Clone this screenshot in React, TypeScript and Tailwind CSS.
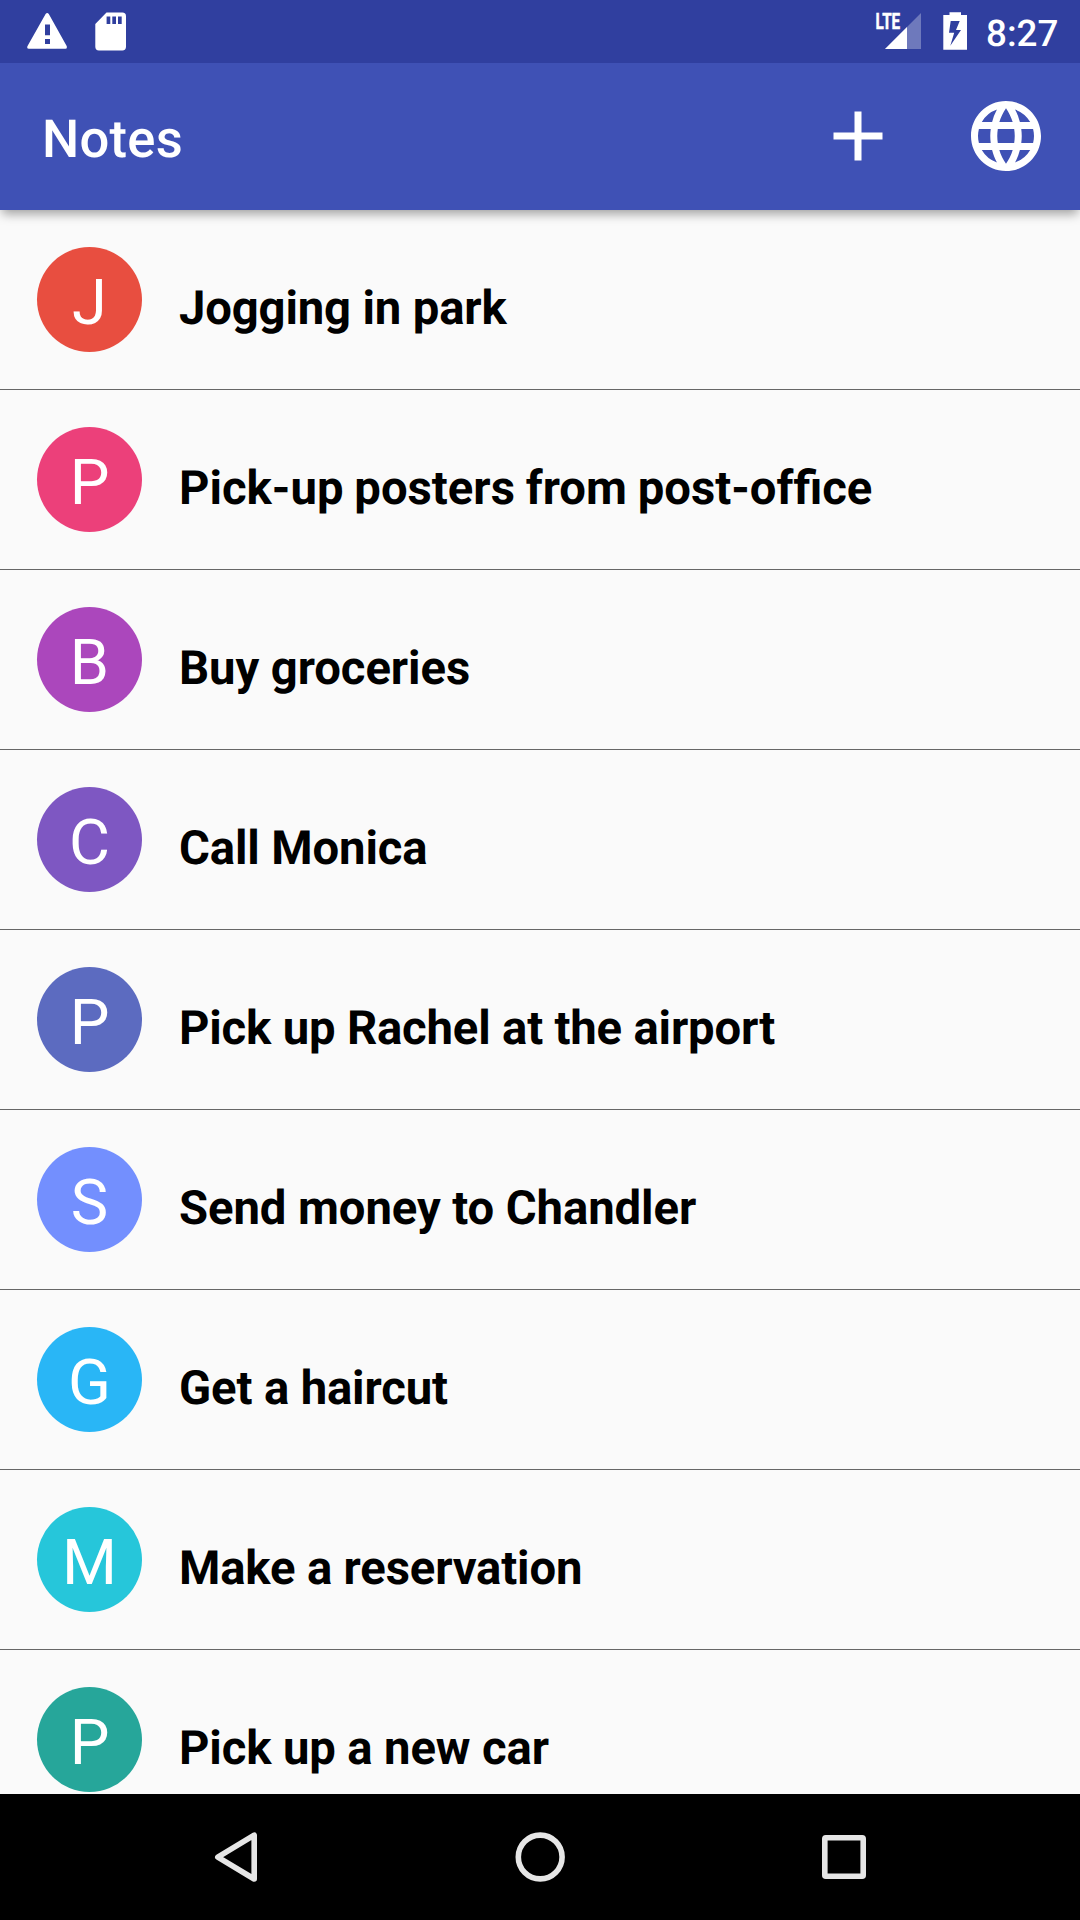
import { MdAdd, MdLanguage } from "react-icons/md";

const notes = [
  { title: "Jogging in park", color: "bg-[#e84e40]", spacing: "tracking-[-0.16px]" },
  { title: "Pick-up posters from post-office", color: "bg-[#ec407a]", spacing: "[word-spacing:-0.9px]" },
  { title: "Buy groceries", color: "bg-[#ab47bc]", spacing: "tracking-[-0.08px]" },
  { title: "Call Monica", color: "bg-[#7e57c2]", spacing: "tracking-[-0.13px]" },
  { title: "Pick up Rachel at the airport", color: "bg-[#5c6bc0]", spacing: "tracking-[-0.18px]" },
  { title: "Send money to Chandler", color: "bg-[#738ffe]", spacing: "tracking-[-0.09px]" },
  { title: "Get a haircut", color: "bg-[#29b6f6]", spacing: "tracking-[-0.14px]" },
  { title: "Make a reservation", color: "bg-[#26c6da]", spacing: "tracking-[-0.16px]" },
  { title: "Pick up a new car", color: "bg-[#26a69a]", spacing: "tracking-[-0.13px]" },
];

// Splits "ffi" after its first letter so that only "fi" is joined as a ligature.
function Title({ text }: { text: string }) {
  const at = text.indexOf("ffi");
  if (at < 0) return <>{text}</>;
  return (
    <>
      {text.slice(0, at + 1)}
      <span className="inline-block">{text.slice(at + 1)}</span>
    </>
  );
}

function StatusBar() {
  return (
    <div className="relative z-20 flex h-[63px] shrink-0 items-start bg-[#303f9f] text-white">
      <svg width="140" height="63" viewBox="0 0 140 63" fill="white">
        <path fillRule="evenodd" d="M45.6 14.1Q47.2 11.9 48.8 14.1L66.8 46.2Q67.4 48.7 65.6 48.7H28.8Q26.7 48.7 27.4 46.2ZM45 24.6V35.3H50V24.6ZM45 39V44H50V39Z" />
        <path fillRule="evenodd" d="M106.5 12.5H122.3Q126 12.5 126 16.2V46.8Q126 50.5 122.3 50.5H99Q95.3 50.5 95.3 46.8V24ZM106.6 16.5V24H110.3V16.5ZM112.3 16.5V24H116V16.5ZM118 16.5V24H121.7V16.5Z" />
      </svg>
      <div className="flex-1" />
      <svg width="110" height="63" viewBox="870 0 110 63" fill="white">
        <path d="M921 13V49H885Z" opacity=".3" />
        <path d="M907 27V49H885Z" />
        <text x="875.6" y="29.3" fontFamily="Roboto" fontSize="21.8" fontWeight="700" textLength="24.6" lengthAdjust="spacingAndGlyphs" stroke="white" strokeWidth=".5">LTE</text>
        <path fillRule="evenodd" d="M949.5 12.3H961V15H967V49.7H943.3V15H949.5ZM950.7 21L949 32.8H954.2L950.3 45.8L961 30H956L959.7 21Z" />
      </svg>
      <div className="w-[100px] pl-[6px] pt-[12px] text-[36.75px] leading-[44px] font-medium [text-rendering:geometricPrecision]">8:27</div>
    </div>
  );
}

function AppBar() {
  return (
    <header className="relative z-10 flex h-[147px] shrink-0 items-center bg-[#3f51b5] pl-[42px] pr-8 text-white shadow-[0_6px_10px_-2px_rgba(0,0,0,0.36)]">
      <h1 className="mt-[5px] flex-1 text-[52.5px] leading-[62px] font-medium tracking-[0.25px] [text-rendering:geometricPrecision]">Notes</h1>
      <MdAdd className="mr-16 mt-[-1px] size-[84px]" />
      <MdLanguage className="mt-[-1px] size-[84px]" />
    </header>
  );
}

function NavigationBar() {
  return (
    <nav className="flex h-[126px] shrink-0 items-center justify-center bg-black">
      <svg width="1080" height="126" fill="none" stroke="#e6e6e6" strokeWidth="5.6" strokeLinejoin="round">
        <path d="M254.2 41.2V85L217.8 63.1Z" />
        <circle cx="540.2" cy="63" r="21.9" />
        <rect x="824.8" y="43.8" width="38.4" height="38.4" rx="1" />
      </svg>
    </nav>
  );
}

export default function App() {
  return (
    <div className="flex h-[1920px] w-[1080px] flex-col overflow-hidden bg-[#fafafa] font-['Roboto',sans-serif]">
      <StatusBar />
      <AppBar />
      <ul className="min-h-0 flex-1 overflow-hidden">
        {notes.map((note) => (
          <li key={note.title} className="flex h-[180px] items-start border-b border-[#666666] px-[37px] pt-[37px]">
            <div className={`flex size-[105px] items-center justify-center rounded-full pt-[6px] text-[63px] leading-none text-white ${note.color}`}>
              {note.title[0]}
            </div>
            <div className={`ml-[37px] mt-[33px] text-[47.25px] leading-[56px] font-bold whitespace-nowrap text-black [text-rendering:geometricPrecision] ${note.spacing}`}>
              <Title text={note.title} />
            </div>
          </li>
        ))}
      </ul>
      <NavigationBar />
    </div>
  );
}
